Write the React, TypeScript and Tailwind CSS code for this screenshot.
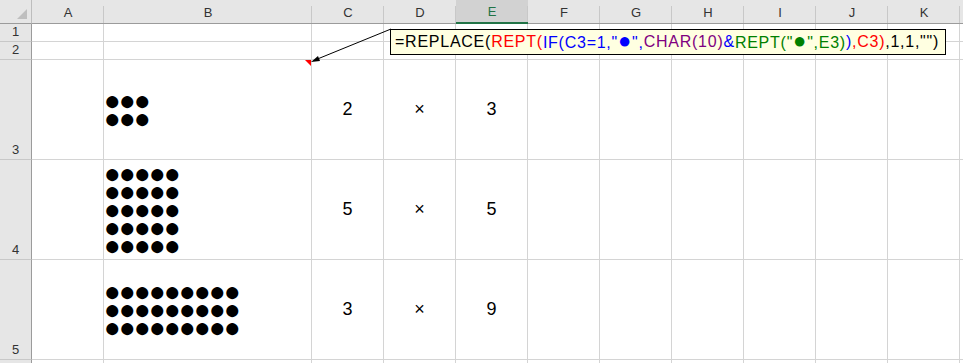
import React from "react";

const cols = ["A", "B", "C", "D", "E", "F", "G", "H", "I", "J", "K"];
const colW: Record<string, string> = { A: "w-[72px]", B: "w-[208px]" };

const rows = [
  { n: "1", h: "h-[18px]" },
  { n: "2", h: "h-[18px]" },
  { n: "3", h: "h-[100px]", dots: [3, 2], c: "2", e: "3" },
  { n: "4", h: "h-[100px]", dots: [5, 5], c: "5", e: "5" },
  { n: "5", h: "h-[100px]", dots: [9, 3], c: "3", e: "9" },
  { n: "", h: "h-[100px]" },
];

// the cell text is REPT(...) with CHAR(10) line breaks
const dotText = (w: number, h: number) => Array.from({ length: h }, () => "●".repeat(w)).join("\n");

const Cell = ({ w, children, className = "" }: { w: string; children?: React.ReactNode; className?: string }) => (
  <div className={`${w} shrink-0 border-r border-b border-[#d4d4d4] bg-white ${className}`}>{children}</div>
);

const Dot = () => <span className="text-[22px] leading-[16px]">●</span>;

export default function App() {
  return (
    <div className="relative h-[363px] w-[963px] overflow-hidden bg-white" style={{ fontFamily: '"Liberation Sans", Arial, sans-serif' }}>
      {/* column header */}
      <div className="flex h-[24px] bg-[#e6e6e6]">
        <div className="relative w-[32px] shrink-0 border-r border-b border-[#9b9b9b] [border-right-color:#bdbdbd]">
          <div className="absolute right-[4px] bottom-[4px] h-0 w-0 border-b-[10px] border-l-[10px] border-b-[#bfbfbf] border-l-transparent" />
        </div>
        {cols.map((c) => {
          const sel = c === "E";
          return (
            <div
              key={c}
              className={`${colW[c] ?? "w-[72px]"} relative flex shrink-0 items-end justify-center pb-[2px] text-[13px] ${
                sel ? "border-b-2 border-[#217346] bg-[#d2d2d2] text-[#217346]" : "border-b border-[#9b9b9b] text-[#333]"
              }`}
            >
              <span className="leading-[16px]">{c}</span>
              <div className="absolute top-[6px] right-0 bottom-0 w-px bg-[#c8c8c8]" />
            </div>
          );
        })}
        <div className="w-[40px] shrink-0 border-b border-[#9b9b9b]" />
      </div>

      {rows.map((r, idx) => (
        <div key={idx} className={`flex ${r.h}`}>
          <div className="flex w-[32px] shrink-0 items-end justify-center border-r border-b border-r-[#9b9b9b] border-b-[#c8c8c8] bg-[#e6e6e6] pb-[3px] text-[13px] leading-[13px] text-[#333]">
            {r.n}
          </div>
          {cols.map((c) => {
            const w = colW[c] ?? "w-[72px]";
            if (r.dots && c === "B")
              return (
                <Cell key={c} w={w} className="flex items-center">
                  <div className="text-[28px] leading-[18px] tracking-[-1.9px] whitespace-pre-line text-black">
                    {dotText(r.dots[0], r.dots[1])}
                  </div>
                </Cell>
              );
            const txt = r.dots ? (c === "C" ? r.c : c === "D" ? "×" : c === "E" ? r.e : "") : "";
            return (
              <Cell key={c} w={w} className="flex items-center justify-center text-[18px] text-black">
                {txt}
              </Cell>
            );
          })}
          <Cell w="w-[40px]" />
        </div>
      ))}

      {/* comment indicator on B3 */}
      <div className="absolute top-[60px] left-[305px] h-0 w-0 border-t-[6px] border-l-[6px] border-t-[#ff0000] border-l-transparent" />

      {/* arrow from comment */}
      <svg className="pointer-events-none absolute top-0 left-0" width="963" height="363">
        <line x1="391" y1="29" x2="315" y2="60" stroke="#000" strokeWidth="1" />
        <polygon points="311,62 318,56 320,61" fill="#000" />
      </svg>

      {/* comment box */}
      <div className="absolute top-[29px] left-[390px] flex h-[26px] w-[556px] items-center border border-black bg-[#ffffe1] pl-[4px] text-[16px] leading-[16px] tracking-[0.75px] whitespace-nowrap text-black">
        <span>=REPLACE(</span>
        <span className="text-[#ff0000]">REPT(</span>
        <span className="text-[#0000ff]">
          IF(C3=1,"<Dot />",
        </span>
        <span className="text-[#800080]">CHAR(10)</span>
        <span className="text-[#0000ff]">&amp;</span>
        <span className="text-[#008000]">
          REPT("<Dot />",E3)
        </span>
        <span className="text-[#0000ff]">)</span>
        <span className="text-[#ff0000]">,C3)</span>
        <span>,1,1,"")</span>
      </div>
    </div>
  );
}
